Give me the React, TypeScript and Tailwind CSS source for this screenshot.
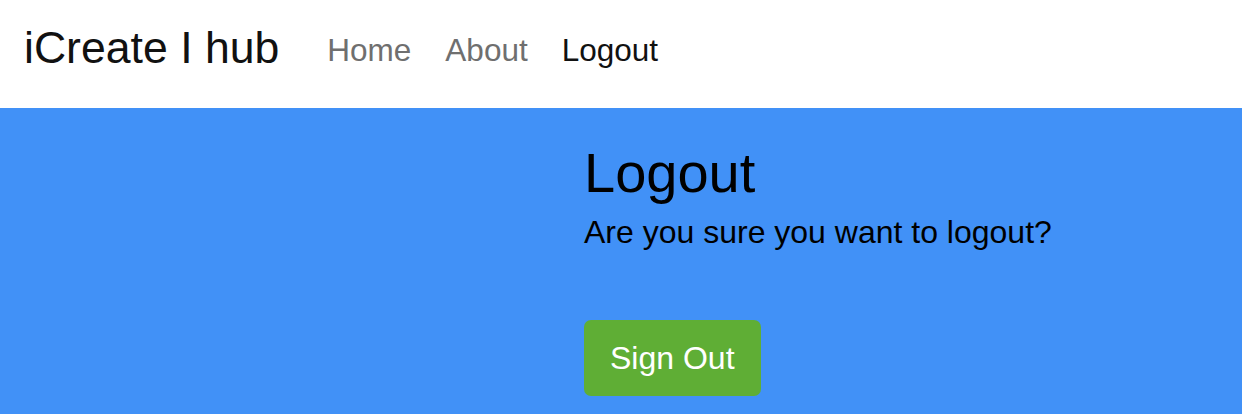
export default function App() {
  const links = [
    { label: "Home", active: false },
    { label: "About", active: false },
    { label: "Logout", active: true },
  ];
  return (
    <div
      className="min-h-[414px] bg-[#4191f7]"
      style={{ fontFamily: '"Liberation Sans", Arial, sans-serif' }}
    >
      <nav className="flex h-[108px] items-start bg-white pl-6">
        <a href="#" className="mt-[15px] mr-[31px] text-[44.6px] leading-[1.5] text-[#111]">
          iCreate I hub
        </a>
        <ul className="mt-[27px] flex">
          {links.map((l) => (
            <li key={l.label}>
              <a
                href="#"
                className={
                  l.active
                    ? "block px-[17px] text-[31.5px] leading-[1.5] text-[#111]"
                    : "block px-[17px] text-[31.5px] leading-[1.5] text-[#6f6f6f]"
                }
              >
                {l.label}
              </a>
            </li>
          ))}
        </ul>
      </nav>

      <main className="ml-[584px] pt-[31px]">
        <h1 className="mb-[2px] text-[56px] leading-[1.2] text-black">Logout</h1>
        <p className="text-[32px] leading-[1.5] text-black">
          Are you sure you want to logout?
        </p>
        <button className="mt-[64px] rounded-[7px] bg-[#5fae35] px-[26px] py-[14px] text-[32px] leading-[1.5] text-white">
          Sign Out
        </button>
      </main>
    </div>
  );
}
